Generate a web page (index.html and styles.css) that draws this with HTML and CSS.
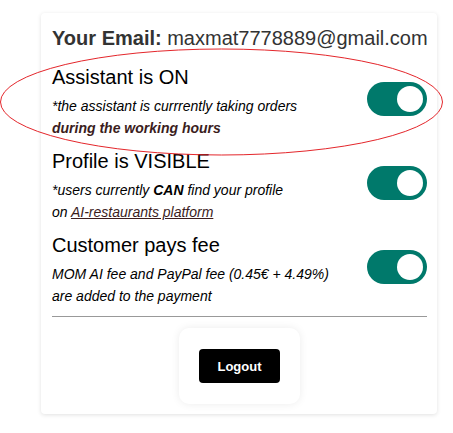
FILE: index.html
```html
<!DOCTYPE html>
<html>
<head>
<meta charset="utf-8">
<link rel="stylesheet" href="styles.css">
</head>
<body>
<div class="card">
  <div class="email"><b>Your Email:</b> maxmat7778889@gmail.com</div>
  <div class="setting first">
    <div class="info">
      <div class="title">Assistant is ON</div>
      <div class="desc">*the assistant is currrently taking orders<br><b class="mark">during the working hours</b></div>
    </div>
    <div class="switch"><span class="knob"></span></div>
  </div>
  <div class="setting">
    <div class="info">
      <div class="title">Profile is VISIBLE</div>
      <div class="desc">*users currently <b>CAN</b> find your profile<br>on <a class="link" href="#">AI-restaurants platform</a></div>
    </div>
    <div class="switch"><span class="knob"></span></div>
  </div>
  <div class="setting">
    <div class="info">
      <div class="title">Customer pays fee</div>
      <div class="desc">MOM AI fee and PayPal fee (0.45€ + 4.49%)<br>are added to the payment</div>
    </div>
    <div class="switch"><span class="knob"></span></div>
  </div>
  <hr class="divider">
  <div class="logout-wrap">
    <div class="logout-box"><button class="logout">Logout</button></div>
  </div>
</div>
<svg class="annotation" width="453" height="433" viewBox="0 0 453 433">
  <ellipse cx="221.5" cy="102" rx="221" ry="53" fill="none" stroke="#e4262b" stroke-width="1"/>
</svg>
</body>
</html>
```
FILE: styles.css
```css
html, body {
  margin: 0;
  padding: 0;
  background: #fff;
}
body {
  font-family: "Liberation Sans", Arial, sans-serif;
  color: #000;
  width: 453px;
  height: 433px;
  position: relative;
  overflow: hidden;
}
.card {
  width: 375px;
  margin: 13px 0 0 41px;
  padding: 13px 10px 10px 11px;
  background: #fff;
  border-radius: 4px;
  box-shadow: 0 1px 4px rgba(0, 0, 0, 0.12);
}
.email {
  font-size: 20px;
  line-height: 24px;
  color: #333;
  white-space: nowrap;
}
.email b {
  font-weight: bold;
}
.setting {
  display: flex;
  align-items: center;
  justify-content: space-between;
  margin-top: 10px;
}
.setting.first {
  margin-top: 15px;
}
.title {
  font-size: 20px;
  line-height: 24px;
  margin-bottom: 6px;
  color: #000;
}
.desc {
  font-size: 14px;
  line-height: 22px;
  font-style: italic;
  color: #000;
}
.mark {
  color: #3b1d1d;
}
.link {
  color: #3b1d1d;
  text-decoration: underline;
}
.switch {
  width: 60px;
  height: 34px;
  border-radius: 17px;
  background: #00796b;
  display: flex;
  align-items: center;
  justify-content: flex-end;
  padding: 0 4px;
  box-sizing: border-box;
  flex-shrink: 0;
  margin-top: -6px;
}
.knob {
  width: 26px;
  height: 26px;
  border-radius: 50%;
  background: #fff;
}
.divider {
  border: 0;
  border-top: 1px solid #999;
  margin: 9px 0 0 0;
  height: 0;
}
.logout-wrap {
  display: flex;
  justify-content: center;
  padding-top: 11px;
}
.logout-box {
  width: 121px;
  height: 76px;
  box-sizing: border-box;
  border-radius: 10px;
  background: #fff;
  box-shadow: 0 0 8px rgba(0, 0, 0, 0.08);
  display: flex;
  align-items: center;
  justify-content: center;
}
.logout {
  width: 81px;
  height: 34px;
  background: #000;
  color: #fff;
  border: 0;
  border-radius: 4px;
  font-family: "Liberation Sans", Arial, sans-serif;
  font-weight: bold;
  font-size: 13px;
  padding: 0;
}
.annotation {
  position: absolute;
  left: 0;
  top: 0;
  pointer-events: none;
}
```
